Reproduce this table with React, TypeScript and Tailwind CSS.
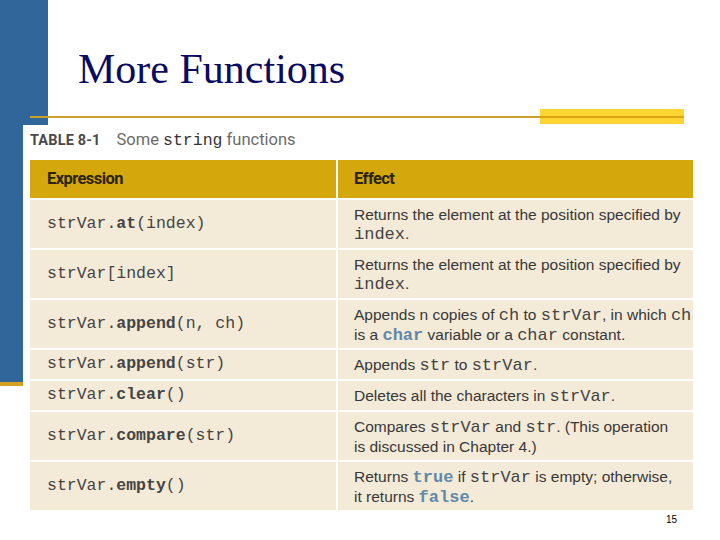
import React from "react";

const mono = "font-['Liberation_Mono',monospace] text-[17px] text-[#444]";
const kw = "font-['Liberation_Mono',monospace] text-[17px] font-bold text-[#6089a8]";

function Code({ children }: { children: React.ReactNode }) {
  return <span className={mono}>{children}</span>;
}

const rows: { expr: React.ReactNode; effect: React.ReactNode; h: string }[] = [
  {
    h: "h-[48px]",
    expr: <>strVar.<b>at</b>(index)</>,
    effect: <>Returns the element at the position specified by<br /><Code>index</Code>.</>,
  },
  {
    h: "h-[48px]",
    expr: <>strVar[index]</>,
    effect: <>Returns the element at the position specified by<br /><Code>index</Code>.</>,
  },
  {
    h: "h-[48px]",
    expr: <>strVar.<b>append</b>(n, ch)</>,
    effect: (
      <>
        Appends n copies of <Code>ch</Code> to <Code>strVar</Code>, in which <Code>ch</Code>
        <br />is a <span className={kw}>char</span> variable or a <Code>char</Code> constant.
      </>
    ),
  },
  {
    h: "h-[29px]",
    expr: <>strVar.<b>append</b>(str)</>,
    effect: <>Appends <Code>str</Code> to <Code>strVar</Code>.</>,
  },
  {
    h: "h-[29px]",
    expr: <>strVar.<b>clear</b>()</>,
    effect: <>Deletes all the characters in <Code>strVar</Code>.</>,
  },
  {
    h: "h-[48px]",
    expr: <>strVar.<b>compare</b>(str)</>,
    effect: (
      <>
        Compares <Code>strVar</Code> and <Code>str</Code>. (This operation
        <br />is discussed in Chapter 4.)
      </>
    ),
  },
  {
    h: "h-[48px]",
    expr: <>strVar.<b>empty</b>()</>,
    effect: (
      <>
        Returns <span className={kw}>true</span> if <Code>strVar</Code> is empty; otherwise,
        <br />it returns <span className={kw}>false</span>.
      </>
    ),
  },
];

export default function App() {
  return (
    <div className="relative w-[720px] h-[540px] bg-white overflow-hidden">
      {/* slide template backdrop */}
      <div className="absolute left-0 top-0 w-[48px] flex flex-col">
        <div className="h-[382px] bg-[#30669a]" />
        <div className="h-[4px] bg-[#d2a320]" />
      </div>

      <div className="relative flex flex-col">
        <h1 className="pl-[78px] pt-[48px] h-[108px] font-['Liberation_Serif',serif] text-[42px] leading-none text-[#0a0a60]">
          More Functions
        </h1>

        <div className="flex items-center h-[17px]">
          <div className="ml-[30px] w-[510px] h-[2px] bg-[#c9a02c]" />
          <div className="w-[144px] h-[15px] bg-[#ffd531] flex items-center">
            <div className="w-full h-[2px] bg-[#d9a515]" />
          </div>
        </div>

        <div className="ml-[23px] w-[680px] bg-white pl-[7px] pb-[2px]">
          <div className="flex items-center h-[35px] pb-[4px]">
            <span className="font-['Roboto',sans-serif] font-bold text-[14.5px] tracking-[0.01em] text-[#4a4a4a]">
              TABLE 8-1
            </span>
            <span className="ml-[16px] font-['Roboto',sans-serif] text-[16.5px] text-[#6b6b6b]">
              Some <span className="font-['Liberation_Mono',monospace] text-[16.5px] text-[#333]">string</span> functions
            </span>
          </div>

          <div className="grid grid-cols-[306px_355px] gap-x-[2px] gap-y-[2px]">
            <div className="h-[38px] bg-[#d4a80d] flex items-center pl-[17px] font-['Roboto',sans-serif] font-bold text-[16.5px] tracking-[-0.035em] text-[#2b2410]">
              Expression
            </div>
            <div className="h-[38px] bg-[#d4a80d] flex items-center pl-[16px] font-['Roboto',sans-serif] font-bold text-[16.5px] tracking-[-0.035em] text-[#2b2410]">
              Effect
            </div>
            {rows.map((r, i) => (
              <React.Fragment key={i}>
                <div className={r.h + " bg-[#f4ead8] flex items-center pl-[17px] font-['Liberation_Mono',monospace] text-[16.5px] text-[#444]"}>
                  <span>{r.expr}</span>
                </div>
                <div className={r.h + " bg-[#f4ead8] flex items-center pl-[16px] pt-[1px] font-['Liberation_Sans',sans-serif] text-[15.5px] leading-[19px] text-[#383838] whitespace-nowrap"}>
                  <span>{r.effect}</span>
                </div>
              </React.Fragment>
            ))}
          </div>
        </div>

        <div className="flex justify-end pr-[43px] font-['Liberation_Sans',sans-serif] text-[10px] text-black">
          15
        </div>
      </div>
    </div>
  );
}
